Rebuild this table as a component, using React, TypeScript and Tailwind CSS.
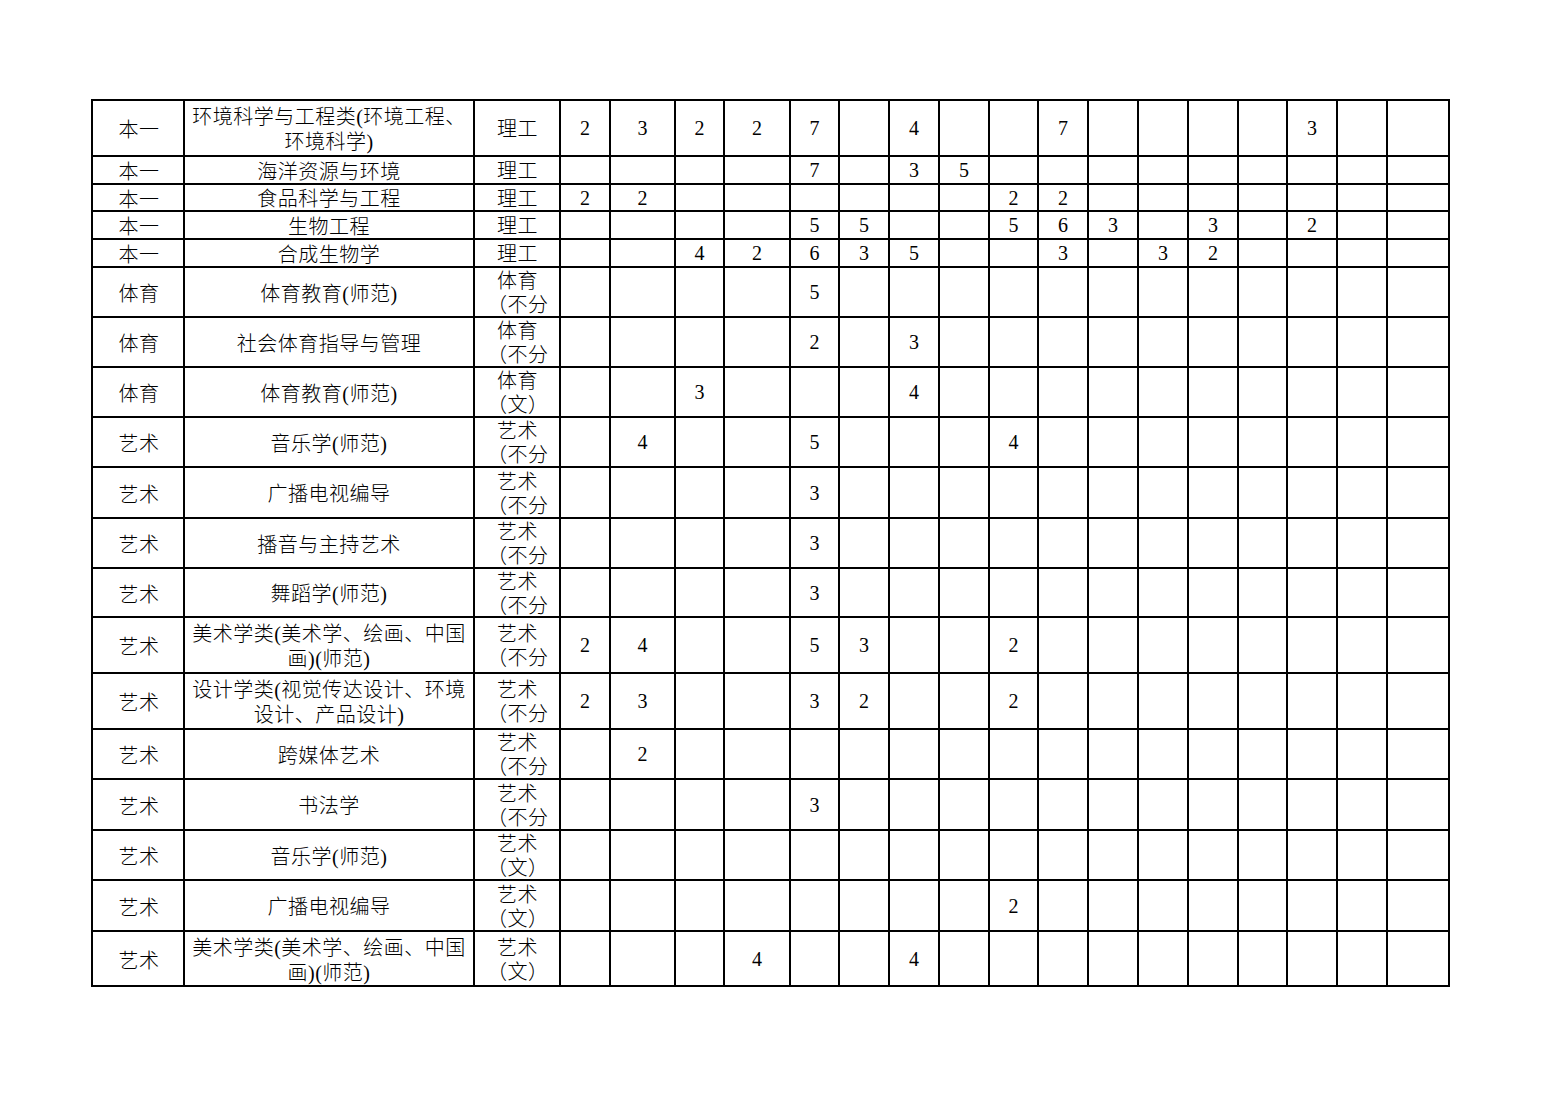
import React from 'react';

type Row = {
  cat: string;
  major: string[];
  kind: string[];
  h: string;
  vals: Record<number, number>;
};

// 17 number columns after the three text columns
const NUM_COLS = Array.from({ length: 17 }, (_, i) => i + 1);

const rows: Row[] = [
  { cat: '本一', major: ['环境科学与工程类(环境工程、', '环境科学)'], kind: ['理工'], h: 'h-[54px]', vals: { 1: 2, 2: 3, 3: 2, 4: 2, 5: 7, 7: 4, 10: 7, 15: 3 } },
  { cat: '本一', major: ['海洋资源与环境'], kind: ['理工'], h: 'h-[26px]', vals: { 5: 7, 7: 3, 8: 5 } },
  { cat: '本一', major: ['食品科学与工程'], kind: ['理工'], h: 'h-[25px]', vals: { 1: 2, 2: 2, 9: 2, 10: 2 } },
  { cat: '本一', major: ['生物工程'], kind: ['理工'], h: 'h-[26px]', vals: { 5: 5, 6: 5, 9: 5, 10: 6, 11: 3, 13: 3, 15: 2 } },
  { cat: '本一', major: ['合成生物学'], kind: ['理工'], h: 'h-[26px]', vals: { 3: 4, 4: 2, 5: 6, 6: 3, 7: 5, 10: 3, 12: 3, 13: 2 } },
  { cat: '体育', major: ['体育教育(师范)'], kind: ['体育', '（不分'], h: 'h-[48px]', vals: { 5: 5 } },
  { cat: '体育', major: ['社会体育指导与管理'], kind: ['体育', '（不分'], h: 'h-[48px]', vals: { 5: 2, 7: 3 } },
  { cat: '体育', major: ['体育教育(师范)'], kind: ['体育', '（文）'], h: 'h-[48px]', vals: { 3: 3, 7: 4 } },
  { cat: '艺术', major: ['音乐学(师范)'], kind: ['艺术', '（不分'], h: 'h-[48px]', vals: { 2: 4, 5: 5, 9: 4 } },
  { cat: '艺术', major: ['广播电视编导'], kind: ['艺术', '（不分'], h: 'h-[49px]', vals: { 5: 3 } },
  { cat: '艺术', major: ['播音与主持艺术'], kind: ['艺术', '（不分'], h: 'h-[48px]', vals: { 5: 3 } },
  { cat: '艺术', major: ['舞蹈学(师范)'], kind: ['艺术', '（不分'], h: 'h-[47px]', vals: { 5: 3 } },
  { cat: '艺术', major: ['美术学类(美术学、绘画、中国', '画)(师范)'], kind: ['艺术', '（不分'], h: 'h-[54px]', vals: { 1: 2, 2: 4, 5: 5, 6: 3, 9: 2 } },
  { cat: '艺术', major: ['设计学类(视觉传达设计、环境', '设计、产品设计)'], kind: ['艺术', '（不分'], h: 'h-[54px]', vals: { 1: 2, 2: 3, 5: 3, 6: 2, 9: 2 } },
  { cat: '艺术', major: ['跨媒体艺术'], kind: ['艺术', '（不分'], h: 'h-[48px]', vals: { 2: 2 } },
  { cat: '艺术', major: ['书法学'], kind: ['艺术', '（不分'], h: 'h-[49px]', vals: { 5: 3 } },
  { cat: '艺术', major: ['音乐学(师范)'], kind: ['艺术', '（文）'], h: 'h-[48px]', vals: {} },
  { cat: '艺术', major: ['广播电视编导'], kind: ['艺术', '（文）'], h: 'h-[49px]', vals: { 9: 2 } },
  { cat: '艺术', major: ['美术学类(美术学、绘画、中国', '画)(师范)'], kind: ['艺术', '（文）'], h: 'h-[53px]', vals: { 4: 4, 7: 4 } },
];

const cell = 'bg-white overflow-hidden';

const App: React.FC = () => {
  return (
    <div className="min-h-screen bg-white pl-[91px] pt-[99px] text-black text-[20px] font-light font-['Liberation_Serif','Noto_Sans_CJK_SC',serif]">
      <div className="inline-grid grid-cols-[90px_288px_84px_48px_63px_47px_64px_47px_48px_48px_48px_47px_48px_48px_48px_48px_47px_48px_48px_60px] gap-[2px] bg-black p-[2px]">
        {rows.map((r, i) => (
          <React.Fragment key={i}>
            <div className={`${cell} ${r.h} flex items-center justify-center pt-[4px] pl-[2px] tracking-[0.5px]`}>{r.cat}</div>
            <div className={`${cell} ${r.h} flex flex-col items-center justify-center pt-[4px] leading-[25px] tracking-[0.5px]`}>
              {r.major.map((line, j) => (
                <span key={j} className="whitespace-nowrap">{line}</span>
              ))}
            </div>
            <div className={`${cell} ${r.h} flex flex-col justify-center pt-[2px] pl-[22px] leading-[24px] tracking-[0.5px] [font-feature-settings:'halt']`}>
              {r.kind.map((line, j) => (
                <span key={j} className="whitespace-nowrap">{line}</span>
              ))}
            </div>
            {NUM_COLS.map((c) => (
              <div key={c} className={`${cell} ${r.h} flex items-center justify-center`}>
                {r.vals[c] ?? ''}
              </div>
            ))}
          </React.Fragment>
        ))}
      </div>
    </div>
  );
};

export default App;
